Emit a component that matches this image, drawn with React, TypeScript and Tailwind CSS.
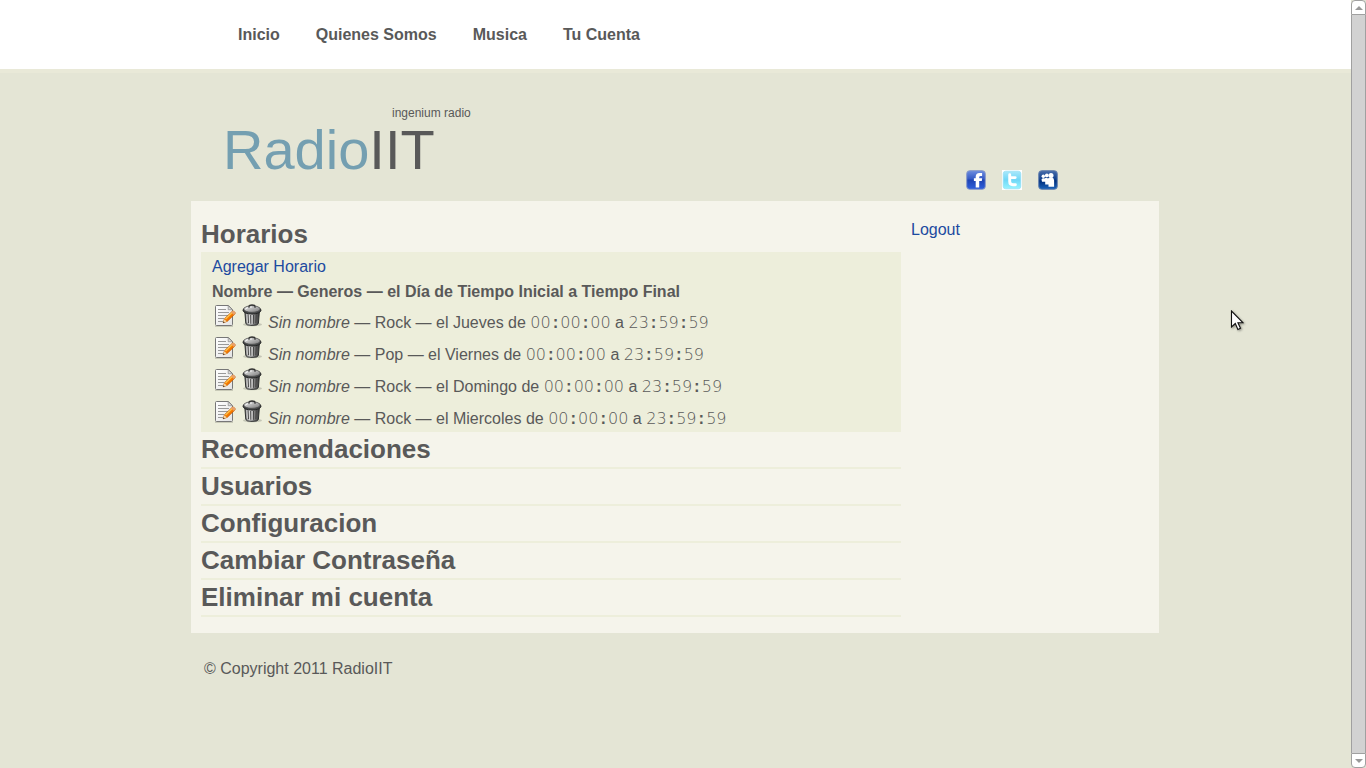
import { Fragment, useState } from "react";

const navItems = ["Inicio", "Quienes Somos", "Musica", "Tu Cuenta"];

const schedules = [
  { genre: "Rock", day: "Jueves" },
  { genre: "Pop", day: "Viernes" },
  { genre: "Rock", day: "Domingo" },
  { genre: "Rock", day: "Miercoles" },
];

const closedSections = [
  "Recomendaciones",
  "Usuarios",
  "Configuracion",
  "Cambiar Contraseña",
  "Eliminar mi cuenta",
];

function Time({ value }: { value: string }) {
  return (
    <time className="font-['DejaVu_Sans'] text-[16px] font-extralight">
      {value.split(":").map((part, i) => (
        <Fragment key={i}>
          {i > 0 && <span className="font-['Liberation_Mono'] font-bold">:</span>}
          {part}
        </Fragment>
      ))}
    </time>
  );
}

function EditIcon() {
  return (
    <svg viewBox="0 1 24 24" className="size-6" aria-hidden="true">
      <defs>
        <linearGradient id="paper" x1="0" y1="0" x2="1" y2="1">
          <stop offset="0" stopColor="#ffffff" />
          <stop offset="1" stopColor="#e4e4e4" />
        </linearGradient>
      </defs>
      <path d="M3 23.2h18" stroke="#b9baa9" strokeWidth="1" />
      <path d="M4.5 2.5h12l4 4v15q0 1-1 1h-15q-1 0-1-1v-18q0-1 1-1z" fill="url(#paper)" stroke="#777" />
      <path d="M16.2 2.8v3.9h4.1z" fill="#ddd" stroke="#888" strokeWidth=".7" />
      <path d="M6 6.5h8M6 9.5h11M6 12.5h10M6 15.5h6M6 18.5h5" stroke="#999" />
      <path d="m11.2 19.8 1.2-4 7.7-7.4q.9-.8 2 .1l.7.8q.8 1-.1 1.9l-7.5 7.2z" fill="#f57900" stroke="#b95400" strokeWidth=".7" />
      <path d="m13.5 15.9 6.9-6.6" stroke="#fdc24c" strokeWidth="1.4" />
      <path d="m11.2 19.8 1.1-3.5 2.5 2.2z" fill="#f0d6a4" />
      <path d="m11 20 .5-1.6 1.1 1.1z" fill="#222" />
      <path d="m19.2 9.2 1.2-1.1q.9-.7 1.8.2l.8.9q.7.9-.1 1.7l-1 1z" fill="#e8a06c" />
    </svg>
  );
}

function TrashIcon() {
  return (
    <svg viewBox="0 1 24 24" className="size-6" aria-hidden="true">
      <defs>
        <linearGradient id="can">
          <stop offset="0" stopColor="#555" />
          <stop offset=".3" stopColor="#ddd" />
          <stop offset=".6" stopColor="#888" />
          <stop offset="1" stopColor="#333" />
        </linearGradient>
        <linearGradient id="lid" x1="0" y1="0" x2="1" y2="1">
          <stop offset="0" stopColor="#eee" />
          <stop offset="1" stopColor="#777" />
        </linearGradient>
      </defs>
      <ellipse cx="12.5" cy="21.5" rx="9.5" ry="1.8" fill="#9c9d90" opacity=".5" />
      <path d="M4.8 8h14.6l-1 12.4q-.4 2-6.3 2t-6.3-2z" fill="url(#can)" stroke="#2e3030" />
      <path d="m8 11.2.5 9M10.7 12l.2 8.8M13.5 12l-.2 8.8M16.3 11.2l-.5 9" stroke="#444" strokeWidth="1" />
      <path d="m6.8 11 .5 8.5M12.1 12v9" stroke="#f0f0f0" strokeWidth=".7" />
      <ellipse cx="12" cy="7.2" rx="9" ry="3.8" fill="#4b4e4f" stroke="#222" />
      <ellipse cx="12" cy="6" rx="8.2" ry="3.3" fill="url(#lid)" stroke="#444" strokeWidth=".6" />
      <path d="M5.3 6.2q2.4-2.3 6.8-2.3" stroke="#fff" fill="none" strokeWidth=".8" />
      <path d="M9 4.8V3.3q0-1.3 3-1.3t3 1.3v1.5" fill="none" stroke="#333" strokeWidth="1.3" />
    </svg>
  );
}

function FacebookIcon() {
  return (
    <svg viewBox="0 0 20 20" className="size-5" aria-hidden="true">
      <defs>
        <linearGradient id="fb" x1="0" y1="0" x2="0" y2="1">
          <stop offset="0" stopColor="#6d8de0" />
          <stop offset=".45" stopColor="#3459c4" />
          <stop offset=".5" stopColor="#1d43b4" />
          <stop offset="1" stopColor="#2f60dc" />
        </linearGradient>
      </defs>
      <rect x=".7" y=".7" width="18.6" height="18.6" rx="3" fill="url(#fb)" stroke="#8798c8" />
      <path d="M9.7 17.5v-6.4H7.9V8.2h1.8V6.8Q9.7 3 13.4 3h2.7v3h-1.5q-1.4 0-1.4 1.2v1h2.9l-.3 2.9h-2.6v6.4z" fill="#fff" />
    </svg>
  );
}

function TwitterIcon() {
  return (
    <svg viewBox="0 0 20 20" className="size-5" aria-hidden="true">
      <defs>
        <linearGradient id="tw" x1="0" y1="0" x2="0" y2="1">
          <stop offset="0" stopColor="#a9e8fb" />
          <stop offset=".5" stopColor="#70d7f7" />
          <stop offset="1" stopColor="#98f4ff" />
        </linearGradient>
      </defs>
      <path d="M0 0h20v20H0z" fill="#fff" />
      <rect x="1.2" y="1.2" width="17.6" height="17.6" rx="2.5" fill="url(#tw)" stroke="#95def3" strokeWidth=".7" />
      <path d="M7.7 4.8v2.8h5.5M7.7 7.6v4q0 3.2 3.2 3.2h2.5" fill="none" stroke="#fff" strokeWidth="2.9" strokeLinecap="round" strokeLinejoin="round" />
    </svg>
  );
}

function MyspaceIcon() {
  return (
    <svg viewBox="0 0 20 20" className="size-5" aria-hidden="true">
      <defs>
        <linearGradient id="ms" x1="0" y1="0" x2="0" y2="1">
          <stop offset="0" stopColor="#496daa" />
          <stop offset=".45" stopColor="#11418e" />
          <stop offset=".55" stopColor="#002e7c" />
          <stop offset="1" stopColor="#1d65bc" />
        </linearGradient>
      </defs>
      <rect x=".7" y=".7" width="18.6" height="18.6" rx="3" fill="url(#ms)" stroke="#6680ad" />
      <g fill="#fff">
        <circle cx="5.3" cy="6.2" r="1.7" />
        <circle cx="8.8" cy="5.4" r="1.9" />
        <circle cx="13" cy="5.4" r="2.5" />
        <path d="M3.5 9.4q1.2-1.6 3-.8 2-1.4 3.4-.1 1.7-1.4 4.1-.9 2.1.5 2.1 2.8v6.4h-5.6v-2.3H7.2v-2.8H4z" />
      </g>
    </svg>
  );
}

const social = [
  { name: "Facebook", Icon: FacebookIcon },
  { name: "Twitter", Icon: TwitterIcon },
  { name: "MySpace", Icon: MyspaceIcon },
];

function ScrollArrow({ down = false }: { down?: boolean }) {
  return (
    <button
      type="button"
      aria-label={down ? "Bajar" : "Subir"}
      className={
        down
          ? "flex h-[15px] w-full items-center justify-center rounded-b border border-[#a0a0a0] bg-white"
          : "flex h-[15px] w-full items-center justify-center rounded-t border border-[#a0a0a0] bg-white"
      }
    >
      <svg viewBox="0 0 8 4" className="h-1 w-2" aria-hidden="true">
        <path d={down ? "M0 0h8L4 4z" : "M0 4h8L4 0z"} fill="#999" />
      </svg>
    </button>
  );
}

export default function App() {
  const [open, setOpen] = useState(true);

  return (
    <div className="relative flex min-h-screen bg-[#e4e5d5] font-['Liberation_Sans',sans-serif] text-base text-[#595959]">
      <div className="min-w-0 flex-1">
        <div className="border-b-4 border-[#e9e9d8] bg-white pr-px">
          <nav className="mx-auto flex max-w-[968px] gap-9 px-[47px] pt-[23px] pb-[22px]">
            {navItems.map((item) => (
              <a key={item} href="#" className="font-bold leading-6">
                {item}
              </a>
            ))}
          </nav>
        </div>

        <div className="pr-px">
          <div className="mx-auto max-w-[968px]">
            <header className="flex h-32 justify-between pt-8 pr-[101px] pl-8">
              <div>
                <p className="pl-[169px] text-xs leading-4">ingenium radio</p>
                <h1 className="text-[56px] leading-[58px]">
                  <a href="#">
                    <span className="text-[#749fb1]">Radio</span>IIT
                  </a>
                </h1>
              </div>
              <div className="flex items-end gap-4 pb-[11px]">
                {social.map(({ name, Icon }) => (
                  <a key={name} href="#" aria-label={name}>
                    <Icon />
                  </a>
                ))}
              </div>
            </header>

            <div className="flex bg-[#f5f4eb] px-2.5 py-4">
              <main className="w-[700px]">
                <h2 className="text-[26px] leading-[35px] font-bold">
                  <button type="button" aria-expanded={open} onClick={() => setOpen(!open)}>
                    Horarios
                  </button>
                </h2>
                {open && (
                  <div className="bg-[#edeedb] pt-0.5 pl-[11px]">
                    <p className="leading-[25px]">
                      <a href="#" className="text-[#1c4aa0]">
                        Agregar Horario
                      </a>
                    </p>
                    <p className="leading-[25px] font-bold">
                      Nombre — Generos — el Día de Tiempo Inicial a Tiempo Final
                    </p>
                    <ul>
                      {schedules.map(({ genre, day }) => (
                        <li key={day} className="flex h-8 items-start gap-1">
                          <button type="button" aria-label={`Editar ${day}`}>
                            <EditIcon />
                          </button>
                          <button type="button" aria-label={`Borrar ${day}`}>
                            <TrashIcon />
                          </button>
                          <span className="pt-[7px] leading-6">
                            <em>Sin nombre</em> — {genre} — el {day} de <Time value="00:00:00" /> a{" "}
                            <Time value="23:59:59" />
                          </span>
                        </li>
                      ))}
                    </ul>
                  </div>
                )}
                {closedSections.map((title) => (
                  <h2 key={title} className="border-b-2 border-[#edeedb] text-[26px] leading-[35px] font-bold">
                    <button type="button">{title}</button>
                  </h2>
                ))}
              </main>
              <aside className="flex-1 pl-2.5 leading-[25px]">
                <a href="#" className="text-[#1c4aa0]">
                  Logout
                </a>
              </aside>
            </div>

            <footer className="px-[13px] pt-6 leading-6">© Copyright 2011 RadioIIT</footer>
          </div>
        </div>
      </div>

      <div className="sticky top-0 flex h-screen w-[15px] shrink-0 flex-col bg-[#e4e5d5]">
        <ScrollArrow />
        <div className="flex-1 border-x border-[#a0a0a0] bg-[#d2d2d2]" />
        <ScrollArrow down />
      </div>

      <svg
        viewBox="0 0 14 22"
        className="pointer-events-none absolute top-[310px] left-[1230px] h-[22px] w-3.5 drop-shadow-[1px_1px_1px_#0006]"
        aria-hidden="true"
      >
        <path d="M1.5 1v16l3.8-3.5 2.6 6 2.6-1.2-2.6-5.6h5z" fill="#fff" stroke="#111" strokeWidth="1.1" />
      </svg>
    </div>
  );
}
